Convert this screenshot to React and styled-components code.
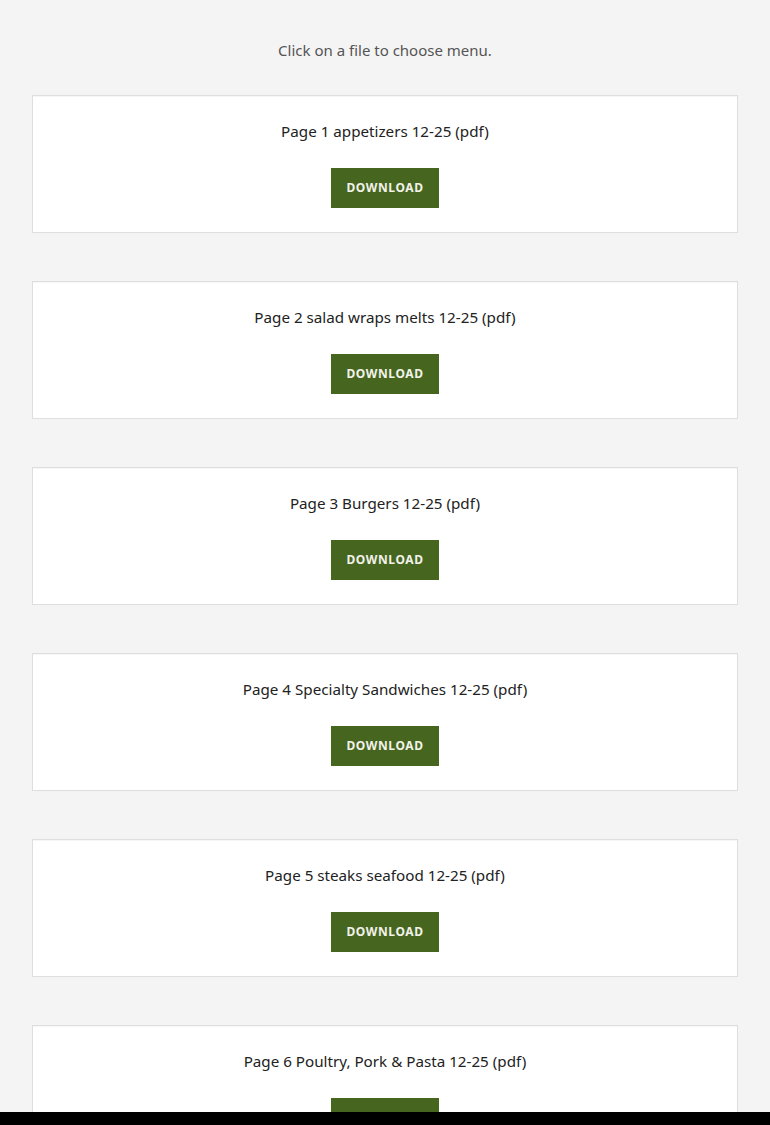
import React from "react";
import styled, { createGlobalStyle } from "styled-components";

const Global = createGlobalStyle`
  html, body { margin: 0; padding: 0; background: #f4f4f4; }
  body { font-family: "Noto Sans", "Open Sans", "DejaVu Sans", sans-serif; }
`;

const Page = styled.main`
  padding: 38px 32px 40px;
  display: flex;
  flex-direction: column;
`;

const Intro = styled.p`
  margin: 0 0 33px;
  text-align: center;
  font-size: 15px;
  line-height: 24px;
  color: #555;
`;

const List = styled.div`
  display: flex;
  flex-direction: column;
  gap: 48px;
`;

const Card = styled.section`
  background: #fff;
  border: 1px solid #dedede;
  box-shadow: inset 0 1px 0 #f6f6f6;
  padding: 23px 20px 24px;
  display: flex;
  flex-direction: column;
  align-items: center;
`;

const Title = styled.div`
  font-size: 15.2px;
  line-height: 24px;
  color: #222;
  margin-bottom: 25px;
`;

const Button = styled.a`
  display: flex;
  align-items: center;
  justify-content: center;
  width: 108px;
  height: 40px;
  padding-bottom: 1px;
  box-sizing: border-box;
  background: #46661f;
  color: #f2f2ea;
  font-size: 12px;
  font-weight: 700;
  letter-spacing: 0.6px;
  text-transform: uppercase;
  text-decoration: none;
  cursor: pointer;
`;

const BottomBar = styled.div`
  position: fixed;
  left: 0;
  right: 0;
  bottom: 0;
  height: 13px;
  background: #000;
`;

const files = [
  "Page 1 appetizers 12-25 (pdf)",
  "Page 2 salad wraps melts 12-25 (pdf)",
  "Page 3 Burgers 12-25 (pdf)",
  "Page 4 Specialty Sandwiches 12-25 (pdf)",
  "Page 5 steaks seafood 12-25 (pdf)",
  "Page 6 Poultry, Pork & Pasta 12-25 (pdf)",
];

export default function App() {
  return (
    <>
      <Global />
      <Page>
        <Intro>Click on a file to choose menu.</Intro>
        <List>
          {files.map((f) => (
            <Card key={f}>
              <Title>{f}</Title>
              <Button>Download</Button>
            </Card>
          ))}
        </List>
      </Page>
      <BottomBar />
    </>
  );
}
